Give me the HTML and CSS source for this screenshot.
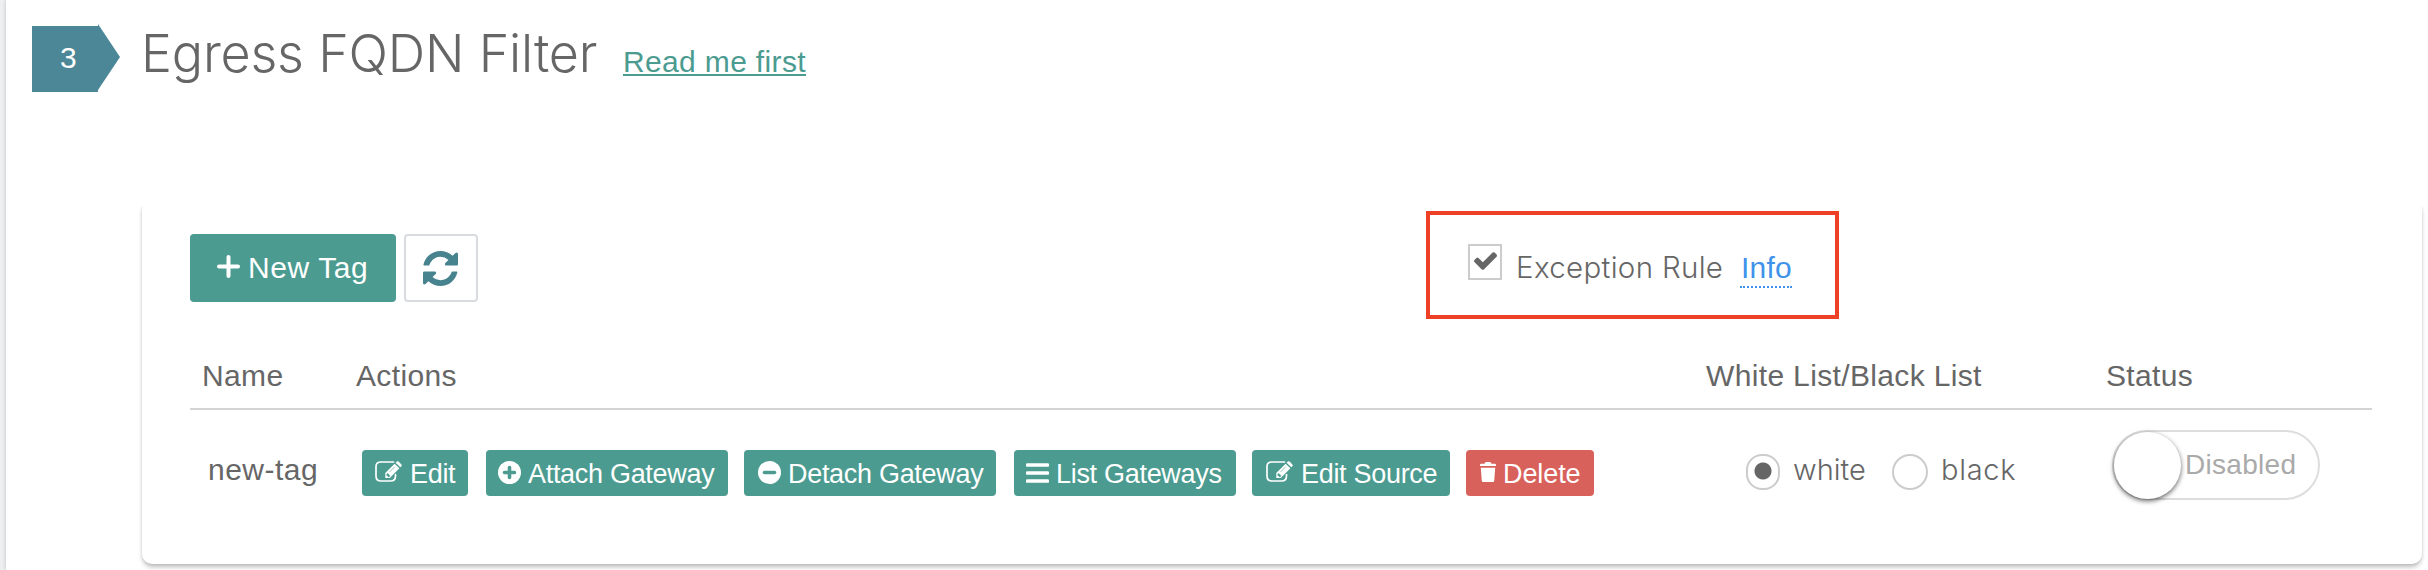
FILE: index.html
```
<!DOCTYPE html>
<html lang="en">
<head>
<meta charset="utf-8">
<title>Egress FQDN Filter</title>
<link rel="stylesheet" href="styles.css">
</head>
<body>
<svg class="defs" width="0" height="0">
  <symbol id="edit" viewBox="0 0 27 21">
    <path d="M18.500 1H6Q1 1 1 5.500V15Q1 20 6 20H15.500Q20.500 20 20.500 15V13.500" fill="none" stroke="currentColor" stroke-width="1.700" stroke-linecap="round"/>
    <path d="M10.300 17V12L19.600 2.700L24.400 7.300L14.800 17ZM20.600 1.700L21.800.6Q22.700-.2 23.600.6L26.400 3.400Q27.200 4.300 26.400 5.200L25.300 6.300Z" fill="currentColor"/>
    <path d="M11.800 13.200V14.500H13V15.700H14.100L15 14.800L12.700 12.400ZM14.600 10.900L19.800 5.700" fill="#4b9b90" stroke="#4b9b90" stroke-width=".6"/>
  </symbol>
</svg>
<main class="page">
  <header class="heading">
    <div class="step">3</div>
    <h1 class="title">Egress FQDN Filter</h1>
    <a class="readme">Read me first</a>
  </header>
  <section class="card">
    <div class="toolbar">
      <button class="new"><svg class="plus" viewBox="0 0 23 23"><path d="M11.500 2V21M2 11.500H21" stroke="currentColor" stroke-width="4" stroke-linecap="round"/></svg><span>New Tag</span></button>
      <button class="refresh"><svg viewBox="0 0 1536 1536"><path fill="currentColor" d="M1511 928q0 5-1 7-64 268-268 434.500t-478 166.500q-146 0-282.500-55t-243.500-157l-129 129q-19 19-45 19t-45-19-19-45v-448q0-26 19-45t45-19h448q26 0 45 19t19 45-19 45l-137 137q71 66 161 102t187 36q134 0 250-65t186-179q11-17 53-117 8-23 30-23h192q13 0 22.500 9.500t9.500 22.500zm25-800v448q0 26-19 45t-45 19h-448q-26 0-45-19t-19-45 19-45l138-138q-148-137-349-137-134 0-250 65t-186 179q-11 17-53 117-8 23-30 23h-199q-13 0-22.500-9.500t-9.500-22.500v-7q65-268 270-434.500t480-166.500q146 0 284 55.500t245 156.500l130-129q19-19 45-19t45 19 19 45z"/></svg></button>
      <div class="exception">
        <span class="checkbox"><svg viewBox="121 334 1550 1188"><path fill="currentColor" d="M1671 566q0 40-28 68l-724 724-136 136q-28 28-68 28t-68-28l-136-136-362-362q-28-28-28-68t28-68l136-136q28-28 68-28t68 28l294 295 656-657q28-28 68-28t68 28l136 136q28 28 28 68z"/></svg></span>
        <span class="rule">Exception Rule</span>
        <a class="info">Info</a>
      </div>
    </div>
    <div class="row head">
      <span class="h-name">Name</span><span class="h-actions">Actions</span><span class="h-list">White List/Black List</span><span class="h-status">Status</span>
    </div>
    <div class="row item">
      <span class="tag">new-tag</span>
      <div class="actions">
        <button class="btn b-edit"><svg class="i-edit"><use href="#edit"/></svg><span>Edit</span></button>
        <button class="btn b-attach"><svg class="i-round" viewBox="0 0 23 23"><circle cx="11.500" cy="11.500" r="11.500" fill="currentColor"/><path d="M11.500 6.500V16.500M6.500 11.500H16.500" stroke="#4b9b90" stroke-width="3.600" stroke-linecap="round"/></svg><span>Attach Gateway</span></button>
        <button class="btn b-detach"><svg class="i-round" viewBox="0 0 23 23"><circle cx="11.500" cy="11.500" r="11.500" fill="currentColor"/><path d="M6.500 11.500H16.500" stroke="#4b9b90" stroke-width="3.600" stroke-linecap="round"/></svg><span>Detach Gateway</span></button>
        <button class="btn b-list"><svg class="i-list" viewBox="0 0 23 20"><path d="M1.500 2H21.500M1.500 10H21.500M1.500 18H21.500" stroke="currentColor" stroke-width="3.600" stroke-linecap="round"/></svg><span>List Gateways</span></button>
        <button class="btn b-source"><svg class="i-edit"><use href="#edit"/></svg><span>Edit Source</span></button>
        <button class="btn b-delete"><svg class="i-trash" viewBox="0 0 16 20"><path fill="currentColor" d="M0 4V3Q0 1.700 1.300 1.700H4.500L5.300.4Q5.500 0 6 0H10Q10.500 0 10.700.4L11.500 1.700H14.700Q16 1.700 16 3V4ZM.8 5.700H15.200L14.200 18.800Q14.100 20 13 20H3Q1.900 20 1.800 18.800Z"/></svg><span>Delete</span></button>
      </div>
      <div class="radios">
        <span class="radio on"></span><span class="r-white">white</span>
        <span class="radio"></span><span class="r-black">black</span>
      </div>
      <div class="toggle"><span class="knob"></span><span class="state">Disabled</span></div>
    </div>
  </section>
</main>
</body>
</html>
```
FILE: styles.css
```
* { box-sizing: border-box; }
body { margin: 0; background: #eeeff1; font: 30px/40px "Liberation Sans", Arial, sans-serif; color: #666; white-space: nowrap; overflow: hidden; }
.defs { position: absolute; }
button { font: inherit; border: 0; margin: 0; padding: 0; display: flex; align-items: flex-start; flex: none; }
svg { display: block; flex: none; }
.page { margin-left: 6px; height: 570px; background: #fff; box-shadow: 0 0 4px rgba(0,0,0,.2); overflow: visible; }
.heading { display: flex; align-items: flex-start; height: 200px; padding-left: 26px; }
.step { width: 88px; height: 68px; margin-top: 24px; padding: 14px 0 0 28px; background: #4b8797; color: #fff; clip-path: polygon(0 2px, 66px 2px, 66px 0, 88px 33px, 66px 66px, 66px 68px, 0 68px); }
.title { margin: 24px 0 0 21px; width: 482px; font: 300 52px/60px Inter, sans-serif; letter-spacing: -.2px; }
.readme { margin-top: 42px; width: 183px; height: 34px; color: #4b9b90; letter-spacing: .35px; border-bottom: 2px solid #4b9b90; }
.card { width: 2280px; height: 364px; margin-left: 136px; padding: 11px 50px 0 48px; border-radius: 10px; background: #fff; box-shadow: 0 4px 5px -1px rgba(0,0,0,.26), 0 0 3px rgba(0,0,0,.1); clip-path: inset(6px -6px -12px -6px); }
.toolbar { display: flex; align-items: flex-start; height: 108px; }
.new { width: 206px; height: 68px; margin: 23px 8px 0 0; padding: 14px 0 0 27px; gap: 8px; background: #4b9b90; color: #fff; border-radius: 4px; letter-spacing: .6px; }
.plus { width: 23px; height: 23px; margin-top: 7px; }
.refresh { width: 74px; height: 68px; margin-top: 23px; padding: 15px 0 0 17px; background: #fff; color: #47838f; border: 2px solid #d8dce0; border-radius: 4px; }
.refresh svg { width: 35px; height: 35px; }
.exception { display: flex; align-items: flex-start; width: 413px; height: 108px; margin-left: 948px; padding: 29px 0 0 38px; border: 4px solid #ee4027; }
.checkbox { width: 34px; height: 36px; padding: 6px 0 0 4px; border: 2px solid #ccc; }
.checkbox svg { width: 23px; height: 18px; }
.rule { width: 224px; margin: 3px 0 0 14px; font: 300 29.5px/40px Inter, sans-serif; letter-spacing: .32px; }
.info { height: 40px; width: 52px; margin-top: 4px; padding-left: 1px; color: #4092ea; letter-spacing: .2px; border-bottom: 2px dotted #4092ea; }
.row { display: flex; align-items: flex-start; }
.head { height: 91px; padding: 37px 0 0 12px; border-bottom: 2px solid #d5d5d5; letter-spacing: .35px; }
.h-name { width: 154px; }
.h-actions { width: 1350px; }
.h-list { width: 400px; }
.item { padding-left: 18px; }
.tag { width: 154px; margin-top: 40px; letter-spacing: .5px; }
.actions { display: flex; margin-top: 40px; width: 1384px; }
.btn { height: 46px; padding-top: 4px; background: #4b9b90; color: #fff; font-size: 27px; letter-spacing: -.3px; border-radius: 4px; }
.i-edit { width: 27px; height: 21px; margin: 7px 8px 0 0; }
.i-round { width: 23px; height: 23px; margin: 7px 7px 0 0; }
.i-list { width: 23px; height: 20px; margin: 9px 7px 0 0; }
.i-trash { width: 16px; height: 20px; margin: 8px 7px 0 0; }
.b-edit { width: 106px; margin-right: 18px; padding-left: 13px; }
.b-attach { width: 242px; margin-right: 16px; padding-left: 12px; }
.b-detach { width: 252px; margin-right: 18px; padding-left: 14px; }
.b-list { width: 222px; margin-right: 16px; padding-left: 12px; }
.b-source { width: 198px; margin-right: 16px; padding-left: 14px; }
.b-delete { width: 128px; padding-left: 14px; background: #d9615c; letter-spacing: -.1px; }
.radios { display: flex; width: 366px; margin-top: 40px; font: 300 29px/40px Inter, sans-serif; }
.radio { width: 36px; height: 36px; margin-top: 4px; border: 2px solid #ccc; border-radius: 50%; }
.on { width: 34px; border-radius: 16px; background: radial-gradient(circle at 15px 15px, #666 8px, transparent 9px); }
.r-white { width: 99px; margin-left: 13px; }
.r-black { margin-left: 13px; letter-spacing: .7px; }
.toggle { display: flex; width: 208px; height: 70px; margin-top: 20px; border: 2px solid #ddd; border-radius: 35px; }
.knob { width: 67px; height: 67px; border-radius: 50%; background: #fff; box-shadow: 0 2px 5px rgba(0,0,0,.6); }
.state { margin: 13px 0 0 4px; font-size: 28px; letter-spacing: .3px; color: #aaa; }
```
